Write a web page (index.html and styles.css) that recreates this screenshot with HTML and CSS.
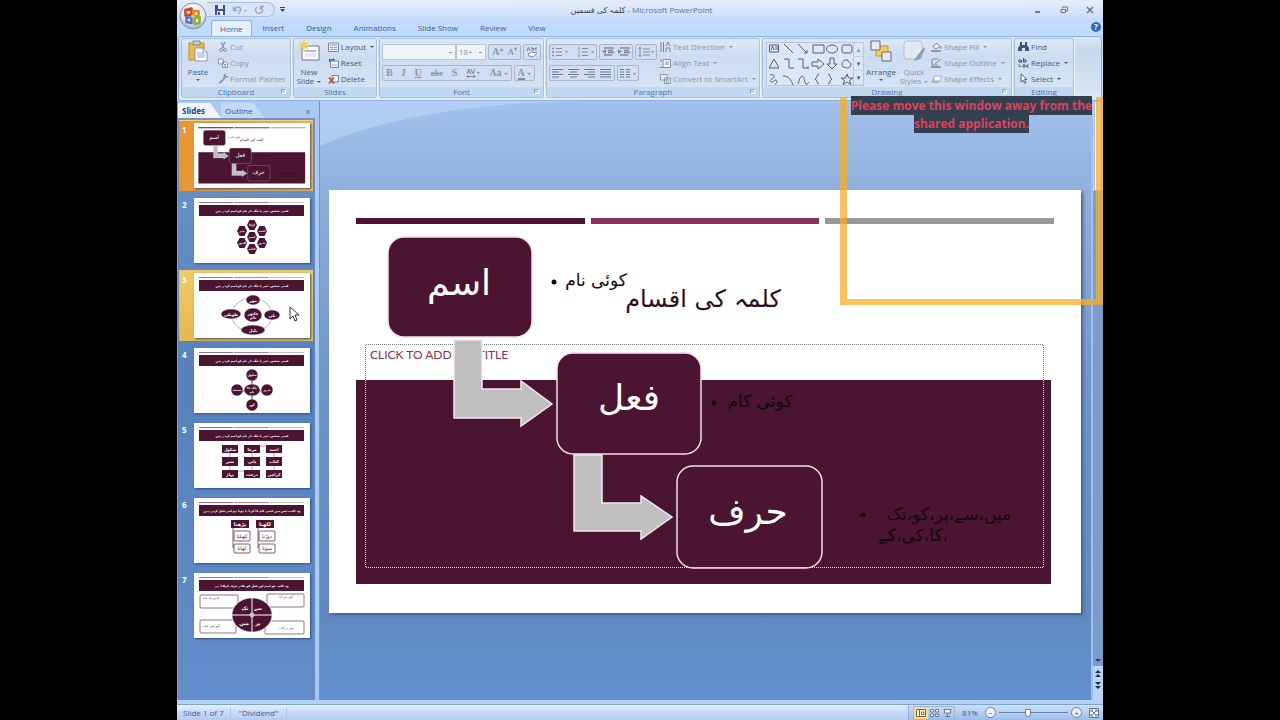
FILE: index.html
```
<!DOCTYPE html>
<html lang="en">
<head>
  <meta charset="UTF-8" />
  <title>کلمہ کی قسمیں - Microsoft PowerPoint</title>
  <link rel="stylesheet" href="styles.css">
</head>
<body>
  <div class="window">
    <header class="titlebar">
      <button class="office-btn" aria-label="Office Button">
        <svg viewBox="0 0 28 28" width="28" height="28">
          <defs>
            <radialGradient id="orb" cx="50%" cy="35%" r="65%">
              <stop offset="0" stop-color="#ffffff" />
              <stop offset="0.7" stop-color="#dfe4ee" />
              <stop offset="1" stop-color="#9aa6bd" />
            </radialGradient>
          </defs>
          <circle cx="14" cy="14" r="13" fill="url(#orb)" stroke="#8493b0" />
          <g fill="none" stroke-width="2.6" stroke-linejoin="round">
            <path d="M6.500 8l6-1.500v6l-6 1z" stroke="#d8451d" />
            <path d="M14.500 9h5v5h-5z" stroke="#e8862a" />
            <path d="M7.500 15.500h5v5.500l-5-1z" stroke="#4a78c4" />
            <path d="M15.500 16l5-1v6l-5 1z" stroke="#8db33a" />
          </g>
          <path d="M12.500 13h3v3h-3z" fill="#f4c63a" />
        </svg>
      </button>
      <div class="quick-access">
        <button aria-label="Save">
          <svg viewBox="0 0 10 10" width="10" height="10"><path d="M0 0h10v10H0z" fill="#3b4fa0" /><path d="M3 0h5v4H3z" fill="#dfe8fa" /><path d="M2 6h6v4H2z" fill="#eef3fc" /><path d="M3 7h2v3H3z" fill="#3b4fa0" /></svg>
        </button>
        <button aria-label="Undo">
          <svg viewBox="0 0 15 10" width="15" height="10" fill="none" stroke="#98a9c8"><path d="M1.500 1.500v4h4M2 5C4 1 9 1 8.500 4.500 8.500 7 7.500 8 6 9" stroke-width="1.500" /><path d="M12 5h3l-1.500 2z" fill="#98a9c8" stroke="none" /></svg>
        </button>
        <button aria-label="Repeat">
          <svg viewBox="0 0 10 10" width="10" height="10" fill="none" stroke="#98a9c8" stroke-width="1.500"><path d="M3 2a3.500 3.500 0 1 0 4 0M6.500 5V1.500H10" /></svg>
        </button>
      </div>
      <button class="qa-more" aria-label="Customize Quick Access Toolbar">
        <svg viewBox="0 0 5 5" width="5" height="5"><path d="M0 0h5v1H0zM0 2h5L2.500 5z" fill="#34496e" /></svg>
      </button>
      <h1 class="title"><span class="urdu" dir="rtl">کلمہ کی قسمیں</span> - Microsoft PowerPoint</h1>
      <div class="window-buttons">
        <button aria-label="Minimize"><svg viewBox="0 0 8 8" width="8" height="8"><path d="M1 5h5v2H1z" fill="#6b7686" /></svg></button>
        <button aria-label="Restore"><svg viewBox="0 0 8 8" width="8" height="8" fill="none" stroke="#6b7686"><path d="M2.500 2.500V1h5v4H6" /><path d="M1 3.500h4.500v3H1z" /></svg></button>
        <button aria-label="Close"><svg viewBox="0 0 8 8" width="8" height="8" stroke="#6b7686" stroke-width="1.500"><path d="M1 1l6 6M7 1L1 7" /></svg></button>
      </div>
    </header>

    <nav class="tabs">
      <button class="tab active">Home</button>
      <button class="tab">Insert</button>
      <button class="tab">Design</button>
      <button class="tab">Animations</button>
      <button class="tab">Slide Show</button>
      <button class="tab">Review</button>
      <button class="tab">View</button>
      <button class="help" aria-label="Help">?</button>
    </nav>

    <div class="ribbon">
      <section class="group clipboard">
        <div class="group-body">
          <button class="big">
            <svg viewBox="0 0 20 22" width="20" height="22"><path d="M1 3h15v17H1z" fill="#edb94c" stroke="#c48d28" /><path d="M5 1h7v4H5z" fill="#c3cad6" stroke="#7f8999" /><path d="M7 8h8l4 4v9H7z" fill="#fff" stroke="#8695b0" /><path d="M15 8v4h4M9 13h7M9 15h8M9 17h8" fill="none" stroke="#8fa9d6" /></svg>
            <span>Paste</span><i class="caret"></i>
          </button>
          <div class="stack">
            <button class="small" disabled><svg viewBox="0 0 10 10" width="10" height="10" fill="none" stroke="#8795ab"><path d="M3 0l3 6M7 0L4 6" stroke-width="1.300" /><circle cx="3" cy="8" r="1.500" /><circle cx="7" cy="8" r="1.500" /></svg>Cut</button>
            <button class="small" disabled><svg viewBox="0 0 10 10" width="10" height="10" fill="#edf2f9" stroke="#8795ab"><path d="M.5 1h4l1 1v4h-5zM4.500 4h4l1 1v4.500h-5z" /><path d="M6 6.500h2M6 8h2" /></svg>Copy</button>
            <button class="small" disabled><svg viewBox="0 0 10 10" width="10" height="10" fill="#8795ab"><path d="M6 0h2L7 5 3 9 0 10l2-3 3-2z" /><path d="M6 2h4v1.500H6z" /></svg>Format Painter</button>
          </div>
        </div>
        <div class="group-label">Clipboard<i class="launcher"></i></div>
      </section>

      <section class="group slides">
        <div class="group-body">
          <button class="big">
            <svg viewBox="0 0 22 22" width="22" height="22"><path d="M4 6h17v14H4z" fill="#fff" stroke="#66799c" /><path d="M7 10h11v2H7z" fill="#a5b9d9" /><path d="M7 14h11M7 16h11" stroke="#c6d0e0" /><path d="M6 0v11M1 5.500h10M2 2l8 7M10 2L2 9" stroke="#f0cf42" stroke-width="1.500" /></svg>
            <span>New<br />Slide<i class="caret"></i></span>
          </button>
          <div class="stack">
            <button class="small"><svg viewBox="0 0 11 10" width="11" height="10"><path d="M.5 1h10v8.500H.5z" fill="#f2f6fc" stroke="#7388ae" /><path d="M2 3h7M2 5.500h3M2 7.500h3M6 5.500h3M6 7.500h3" stroke="#8196bb" /></svg>Layout<i class="caret"></i></button>
            <button class="small"><svg viewBox="0 0 11 10" width="11" height="10"><path d="M2.500 3h8v6.500h-8z" fill="#f2f6fc" stroke="#7388ae" /><path d="M4 7h2M7 7h2" stroke="#8196bb" /><path d="M1 4V1h4V0l2 1.700L5 3.500V2.500H2V4z" fill="#3566b4" /></svg>Reset</button>
            <button class="small"><svg viewBox="0 0 11 10" width="11" height="10"><path d="M4 1.500h6.500V8H4z" fill="#f2f6fc" stroke="#7388ae" /><path d="M1 3.500l5 6M6 3.500l-5 6" stroke="#d6492e" stroke-width="1.700" /></svg>Delete</button>
          </div>
        </div>
        <div class="group-label">Slides</div>
      </section>

      <section class="group font">
        <div class="group-body rows">
          <div class="row">
            <select class="font-name" aria-label="Font" disabled><option></option></select>
            <select class="font-size" aria-label="Font Size" disabled><option>18+</option></select>
            <div class="btn-set serif"><button disabled>A<sup>▴</sup></button><button class="shrink" disabled>A<sup>▾</sup></button></div>
            <div class="btn-set"><button disabled aria-label="Clear Formatting"><svg viewBox="0 0 12 12" width="12" height="12" fill="none" stroke="#7e8ca4"><path d="M1 5l1.500-4L4 5M6 1v3h2V2.500H6M11 2H9.500v2H11" /><path d="M2 8l4-2 5 1-4 4-4-1z" fill="#fff" /></svg></button></div>
          </div>
          <div class="row">
            <div class="btn-set serif styles">
              <button disabled><b>B</b></button><button disabled><em>I</em></button><button disabled><u>U</u></button><button disabled><s>abe</s></button><button disabled><b>S</b></button><button disabled aria-label="Character Spacing"><svg viewBox="0 0 14 11" width="14" height="11" fill="none" stroke="#7e8ca4"><path d="M1 6l2-5 2 5M2 4h2M5 1l2 5 2-5M1 8.500h8M2.500 7L1 8.500 2.500 10M7.500 7L9 8.500 7.500 10" /><path d="M11 4h3l-1.500 2z" fill="#7e8ca4" stroke="none" /></svg></button><button disabled>Aa<i class="caret"></i></button>
            </div>
            <div class="btn-set serif"><button class="color" disabled><span>A</span><i class="caret"></i></button></div>
          </div>
        </div>
        <div class="group-label">Font<i class="launcher"></i></div>
      </section>

      <section class="group paragraph">
        <div class="group-body">
          <div class="rows">
            <div class="row">
              <div class="btn-set wide">
                <button disabled aria-label="Bullets"><svg viewBox="0 0 16 10" width="16" height="10" stroke="#7e8ca4"><path d="M4 1.500h6M4 5h6M4 8.500h6" /><path d="M0 1.500h2M0 5h2M0 8.500h2" stroke-width="1.500" /><path d="M13 4h3l-1.500 2z" fill="#7e8ca4" stroke="none" /></svg></button>
                <button disabled aria-label="Numbering"><svg viewBox="0 0 16 10" width="16" height="10" stroke="#7e8ca4"><path d="M4 1.500h6M4 5h6M4 8.500h6M1 0v3M1 4v2.500M1 7.500V10" /><path d="M13 4h3l-1.500 2z" fill="#7e8ca4" stroke="none" /></svg></button>
              </div>
              <div class="btn-set">
                <button disabled aria-label="Decrease Indent"><svg viewBox="0 0 12 10" width="12" height="10" stroke="#7e8ca4"><path d="M2 1h10M6 3.500h5M6 5.500h6M2 8h8" stroke-width="1.300" /><path d="M4 2v5L0 4.500z" fill="#7e8ca4" stroke="none" /></svg></button>
                <button disabled aria-label="Increase Indent"><svg viewBox="0 0 12 10" width="12" height="10" stroke="#7e8ca4"><path d="M2 1h10M6 3.500h5M6 5.500h6M2 8h8" stroke-width="1.300" /><path d="M0 2v5l4-2.500z" fill="#7e8ca4" stroke="none" /></svg></button>
              </div>
              <div class="btn-set"><button disabled aria-label="Line Spacing"><svg viewBox="0 0 16 10" width="16" height="10" fill="none" stroke="#7e8ca4"><path d="M2 0v10M.5 2L2 .5 3.500 2M.5 8L2 9.500 3.500 8M5 2h7M5 5h7M5 8h7" /><path d="M13 4h3l-1.500 2z" fill="#7e8ca4" stroke="none" /></svg></button></div>
            </div>
            <div class="row">
              <div class="btn-set">
                <button disabled aria-label="Align Left"><svg viewBox="0 0 12 9" width="12" height="9" stroke="#6e7d98"><path d="M0 .5h11M0 3h7M0 5.500h11M0 8h7" /></svg></button>
                <button disabled aria-label="Center"><svg viewBox="0 0 12 9" width="12" height="9" stroke="#6e7d98"><path d="M0 .5h11M2 3h7M0 5.500h11M2 8h7" /></svg></button>
                <button disabled aria-label="Align Right"><svg viewBox="0 0 12 9" width="12" height="9" stroke="#6e7d98"><path d="M0 .5h11M4 3h7M0 5.500h11M4 8h7" /></svg></button>
                <button disabled aria-label="Justify"><svg viewBox="0 0 12 9" width="12" height="9" stroke="#6e7d98"><path d="M0 .5h11M0 3h11M0 5.500h11M0 8h11" /></svg></button>
              </div>
              <div class="btn-set"><button disabled aria-label="Columns"><svg viewBox="0 0 16 9" width="16" height="9" stroke="#6e7d98"><path d="M0 .5h4M0 3h4M0 5.500h4M0 8h4M6 .5h4M6 3h4M6 5.500h4M6 8h4" /><path d="M13 4h3l-1.500 2z" fill="#7e8ca4" stroke="none" /></svg></button></div>
            </div>
          </div>
          <div class="stack">
            <button class="small" disabled><svg viewBox="0 0 11 10" width="11" height="10" fill="none" stroke="#7385a3"><path d="M1 0v10M3.500 0v10M6 10V6h4v4M6 4l2-4 2 4" /></svg>Text Direction<i class="caret"></i></button>
            <button class="small" disabled><svg viewBox="0 0 11 10" width="11" height="10" fill="#f4f7fc" stroke="#7e8ca4"><path d="M3 1.500h7.500v8H3z" /><path d="M1 1v3M5 4h4M5 6h4M0 9.500h3" /></svg>Align Text<i class="caret"></i></button>
            <button class="small" disabled><svg viewBox="0 0 11 10" width="11" height="10" fill="#e7edf6" stroke="#8b97ab"><path d="M.5.5H7V6H.5zM4.500 4h6v5.500h-6z" /><path d="M6 6h3M6 8h3" /></svg>Convert to SmartArt<i class="caret"></i></button>
          </div>
        </div>
        <div class="group-label">Paragraph<i class="launcher"></i></div>
      </section>

      <section class="group drawing">
        <div class="group-body">
          <div class="gallery">
            <svg viewBox="0 0 86 45" width="86" height="45" fill="none" stroke="#4f617f">
              <path d="M2.500 4h9v7h-9z" fill="#e3ebf7" /><path d="M4 9l1.500-4L7 9M8 6h3M8 8h3" />
              <path d="M17 3l9 9M31 3l9 9M40 9v3h-3" />
              <path d="M46 4h11v8H46z" /><ellipse cx="65" cy="8" rx="5.500" ry="4" /><rect x="75" y="4" width="10" height="8" rx="2" />
              <path d="M2 27l5-9 5 9zM17 18h5v9h5M31 18h5v9h5M41 25v3" />
              <path d="M45 21h6v-3l6 5-6 5v-3h-6zM63 17h4v6h3l-5 5-5-5h3z" /><path d="M76 26c-3-4 1-8 5-7-1 3 4 2 3 5-1 4-5 3-8 2z" />
              <path d="M3 34c4-2 6 2 2 4s0 5 3 1M8 39c3 0 2 4 0 4M16 35c6 0 8 4 10 9M31 43c4-14 6-6 7-2s3 2 4 0" />
              <path d="M52 33c-3 0-1 4-4 5 3 1 1 5 4 5M61 33c3 0 1 4 4 5-3 1-1 5-4 5" />
              <path d="M80 33l1.500 4H86l-3.500 2.500 1.500 4-4-2.500-4 2.500 1.500-4L74 37h4.500z" />
            </svg>
            <div class="gallery-nav"><button disabled>▴</button><button>▾</button><button>▾</button></div>
          </div>
          <button class="big">
            <svg viewBox="0 0 22 22" width="22" height="22" stroke-width="1"><path d="M6 6h12v10H6z" fill="#f6cf50" stroke="#b8942c" /><path d="M1 1h9v9H1z" fill="#e6eaf1" stroke="#5c6880" /><path d="M12 12h9v9h-9z" fill="#e6eaf1" stroke="#5c6880" /></svg>
            <span>Arrange</span><i class="caret"></i>
          </button>
          <button class="big" disabled>
            <svg viewBox="0 0 22 22" width="22" height="22"><rect x="1" y="1" width="18" height="18" rx="3" fill="#e2e9f3" stroke="#b2bdce" /><path d="M21 7l-7 9-3 5 6-2 5-10z" fill="#8f9db3" /></svg>
            <span>Quick<br />Styles<i class="caret"></i></span>
          </button>
          <div class="stack">
            <button class="small" disabled><svg viewBox="0 0 11 10" width="11" height="10" stroke="#7e8ca4" fill="#eef2f8"><path d="M2 4l4-3 3 4-5 2z" /><path d="M0 8h10v2H0z" fill="#8a97ac" stroke="none" /><path d="M10 4v3" /></svg>Shape Fill<i class="caret"></i></button>
            <button class="small" disabled><svg viewBox="0 0 11 10" width="11" height="10" stroke="#7e8ca4" fill="none"><path d="M7 1H1v6h6M10 1L4 6" /><path d="M0 8h10v2H0z" fill="#8a97ac" stroke="none" /></svg>Shape Outline<i class="caret"></i></button>
            <button class="small" disabled><svg viewBox="0 0 11 10" width="11" height="10"><path d="M1 5h7v4H1z" fill="#a7b3c6" /><path d="M3 2h7v5H3z" fill="#f6f9fd" stroke="#a7b3c6" /></svg>Shape Effects<i class="caret"></i></button>
          </div>
        </div>
        <div class="group-label">Drawing<i class="launcher"></i></div>
      </section>

      <section class="group editing">
        <div class="group-body">
          <div class="stack">
            <button class="small"><svg viewBox="0 0 11 10" width="11" height="10" fill="#3d5380"><path d="M2 0h2v3h3V0h2v3l2 3v3H7V6H4v3H0V6l2-3z" /></svg>Find</button>
            <button class="small"><svg viewBox="0 0 11 10" width="11" height="10" fill="none" stroke="#3d5380"><circle cx="2" cy="3" r="1.300" /><path d="M3.500 2v2.500M5.500 0v4.500" /><circle cx="7" cy="3" r="1.300" /><path d="M1 6v2.500h2" stroke="#3d9448" /><circle cx="6" cy="8" r="1.300" /><path d="M10.500 7H9v2h1.500" /></svg>Replace<i class="caret"></i></button>
            <button class="small"><svg viewBox="0 0 11 10" width="11" height="10"><path d="M3 0l6 5.500H6.500l1.500 3-1.300.8-1.400-3L3 8z" fill="#fff" stroke="#4a5f8c" /></svg>Select<i class="caret"></i></button>
          </div>
        </div>
        <div class="group-label">Editing</div>
      </section>
    </div>

    <main class="workspace">
      <aside class="pane">
        <div class="pane-tabs">
          <button class="pane-tab active">Slides</button>
          <button class="pane-tab">Outline</button>
          <button class="pane-close" aria-label="Close">x</button>
        </div>
        <ol class="thumbs">
          <li class="thumb selected"><span class="num">1</span>
            <svg class="page" viewBox="0 0 752 423"><use href="#slide-art" /><use href="#arrows" /></svg>
          </li>
          <li class="thumb"><span class="num">2</span>
            <svg class="page" viewBox="0 0 116 65">
              <g id="head">
                <path d="M5 4.500h34" stroke="#4b1431" stroke-width="0.600" /><path d="M40 4.500h35" stroke="#88305a" stroke-width="0.600" /><path d="M76 4.500h34" stroke="#999" stroke-width="0.600" />
                <path d="M5 7h105v11H5z" fill="#4b1431" />
              </g>
              <text id="noun" class="t" x="58" y="14">کسی شخص، چیز یا جگہ کے نام کو اسم کہتے ہیں</text>
              <g fill="#4b1431">
                <path id="hex" d="M53 27l2.500-5h5l2.500 5-2.500 5h-5z" />
                <use href="#hex" x="-10" y="6" /><use href="#hex" x="10" y="6" /><use href="#hex" y="12" /><use href="#hex" x="-10" y="18" /><use href="#hex" x="10" y="18" /><use href="#hex" y="24" />
              </g>
              <g class="t"><text x="58" y="28">لڑکا</text><text x="48" y="34">چیز</text><text x="68" y="34">احمد</text><text x="58" y="40">اسم</text><text x="48" y="46">لاہور</text><text x="68" y="46">شہر</text><text x="58" y="52">کتاب</text></g>
            </svg>
          </li>
          <li class="thumb hover"><span class="num">3</span>
            <svg class="page" viewBox="0 0 116 65">
              <use href="#head" /><use href="#noun" />
              <ellipse cx="58" cy="42" rx="20" ry="17" fill="none" stroke="#b5b2b5" />
              <g fill="#4b1431" stroke="#fff" stroke-width="0.500"><ellipse cx="59" cy="27" rx="7" ry="5" /><ellipse cx="37" cy="41" rx="10" ry="5" /><ellipse cx="78" cy="42" rx="8" ry="5" /><ellipse cx="59" cy="57" rx="12" ry="5" /><ellipse cx="59" cy="42" rx="9" ry="7" /></g>
              <g class="t big-t"><text x="59" y="29">مور</text><text x="37" y="43">طوطی</text><text x="78" y="44">بلی</text><text x="59" y="59">بلبل</text><text x="59" y="42">جانور</text><text x="59" y="46">نام</text></g>
            </svg>
          </li>
          <li class="thumb"><span class="num">4</span>
            <svg class="page" viewBox="0 0 116 65">
              <use href="#head" /><use href="#noun" />
              <path d="M58 28v30M43 43h30" stroke="#4b1431" />
              <g fill="#4b1431" stroke="#fff" stroke-width="0.500"><circle cx="58" cy="27" r="6" /><circle cx="43" cy="42" r="6" /><circle cx="73" cy="42" r="6" /><circle cx="58" cy="57" r="6" /><ellipse cx="58" cy="42" rx="8" ry="6" /></g>
              <g class="t"><text x="58" y="28">سکول</text><text x="43" y="43">مسجد</text><text x="73" y="43">شہر</text><text x="58" y="58">گھر</text><text x="58" y="41">جگہ کا</text><text x="58" y="45">نام</text></g>
            </svg>
          </li>
          <li class="thumb"><span class="num">5</span>
            <svg class="page" viewBox="0 0 116 65">
              <use href="#head" /><use href="#noun" />
              <path d="M28 22h16v8H28zM50 22h16v8H50zM72 22h16v8H72zM28 34h16v9H28zM50 34h16v9H50zM72 34h16v9H72zM28 47h16v8H28zM50 47h16v8H50zM72 47h16v8H72z" fill="#4b1431" />
              <path d="M36 30v4M58 30v4M80 30v4M36 43v4M58 43v4M80 43v4M44 48h6M66 23h6" stroke="#88305a" stroke-width="0.500" />
              <g class="t big-t"><text x="36" y="28">سکول</text><text x="58" y="28">مرغا</text><text x="80" y="28">احمد</text><text x="36" y="40">شیر</text><text x="58" y="40">پانی</text><text x="80" y="40">کتاب</text><text x="36" y="53">پہاڑ</text><text x="58" y="53">درخت</text><text x="80" y="53">کراچی</text></g>
            </svg>
          </li>
          <li class="thumb"><span class="num">6</span>
            <svg class="page" viewBox="0 0 116 65">
              <use href="#head" /><text class="t" x="58" y="14">وہ کلمہ جس میں کسی کام کا کرنا یا ہونا ہو اسے فعل کہتے ہیں</text>
              <path d="M37 22h18v8H37zM62 22h18v8H62z" fill="#4b1431" />
              <g fill="#fff" stroke="#4b1431" stroke-width="0.700"><path d="M39 30v20M64 30v20" /><rect x="40" y="33" width="16" height="10" rx="1" /><rect x="65" y="33" width="16" height="10" rx="1" /><rect x="40" y="46" width="16" height="9" rx="1" /><rect x="65" y="46" width="16" height="9" rx="1" /></g>
              <g class="t verb"><text x="46" y="28">پڑھنا</text><text x="71" y="28">لکھنا</text><text class="dark" x="48" y="40">کھیلنا</text><text class="dark" x="73" y="40">دوڑنا</text><text class="dark" x="48" y="52">کھانا</text><text class="dark" x="73" y="52">سونا</text></g>
            </svg>
          </li>
          <li class="thumb"><span class="num">7</span>
            <svg class="page" viewBox="0 0 116 65">
              <use href="#head" /><text class="t" x="58" y="14">وہ کلمہ جو اسم اور فعل کو ملائے حرف کہلاتا ہے</text>
              <g fill="#fff" stroke="#4b1431" stroke-width="0.600"><rect x="6" y="22" width="38" height="13" rx="1" /><rect x="73" y="21" width="37" height="13" rx="1" /><rect x="6" y="47" width="36" height="13" rx="1" /><rect x="71" y="48" width="39" height="13" rx="1" /></g>
              <ellipse cx="58" cy="42" rx="20" ry="17" fill="#4b1431" stroke="#fff" stroke-width="0.500" />
              <path d="M58 24v37M37 42h42" stroke="#fff" /><circle cx="58" cy="42" r="2" fill="none" stroke="#fff" stroke-width="0.800" />
              <g class="t verb"><text x="51" y="37">تک</text><text x="64" y="37">سے</text><text x="50" y="52">میں</text><text x="64" y="52">پر</text></g>
              <g class="t"><text class="dark" x="17" y="26">لاہور تک جانا</text><text class="dark" x="92" y="25">گھر سے آیا</text><text class="dark" x="17" y="54">گھر میں کتاب</text><text class="dark" x="92" y="56">میز پر کتاب</text></g>
            </svg>
          </li>
        </ol>
      </aside>

      <div class="canvas">
        <svg class="slide" viewBox="0 0 752 423">
          <g id="slide-art">
            <path d="M27 28h229v6H27z" fill="#4b1431" /><path d="M262 28h228v6H262z" fill="#88305a" /><path d="M496 28h229v6H496z" fill="#96989a" />
            <path d="M27 190h695v204H27z" fill="#4b1431" />
            <text class="heading" x="374" y="117">کلمہ کی اقسام</text>
            <g class="boxes"><rect x="59" y="47" width="144" height="100" rx="16" /><rect x="228" y="163" width="144" height="101" rx="16" /><rect x="348" y="276" width="145" height="102" rx="16" /></g>
            <g class="note"><circle cx="225" cy="92" r="2.500" /><text x="267" y="96">کوئی نام</text><circle cx="385" cy="213" r="2.500" /><text x="431" y="217">کوئی کام</text><circle cx="534" cy="325" r="2.500" /><text x="620" y="330">میں،سے،پر،کو،تک</text><text x="584" y="351">،کا،کی،کے</text></g>
            <g class="word"><text x="130" y="105">اسم</text><text x="300" y="220">فعل</text><text x="419" y="334">حرف</text></g>
          </g>
          <path d="M36.500 190V154.500h678V190" class="placeholder outside" />
          <path d="M36.500 190v187.500h678V190" class="placeholder" />
          <text class="subtitle" x="41" y="169">CLICK TO ADD SUBTITLE</text>
          <g id="arrows" fill="#c1bebf" stroke="#f3e9f1" stroke-width="1.500"><path d="M125 150h28v49h39v-8l31 23-31 22v-8h-67z" /><path d="M245 265h28v48h39v-7l31 21-31 22v-8h-67z" /></g>
        </svg>
      </div>

      <div class="scrollbar">
        <div class="scroll-thumb"></div>
        <div class="scroll-track"><i class="down"></i></div>
        <button aria-label="Previous Slide"><svg viewBox="0 0 6 8" width="6" height="8"><path d="M3 0l3 3H0zM3 4l3 3H0z" fill="#1d2d4c" /></svg></button>
        <button aria-label="Next Slide"><svg viewBox="0 0 6 8" width="6" height="8"><path d="M0 0h6L3 3zM0 4h6L3 7z" fill="#1d2d4c" /></svg></button>
      </div>
      <svg class="pointer" viewBox="0 0 10 16" width="10" height="16"><path d="M1 1v12l3-3 2 5 2-1-2-5h4z" fill="#fff" stroke="#333" /></svg>
    </main>

    <footer class="status">
      <span class="status-item">Slide 1 of 7</span>
      <span class="status-item">"Dividend"</span>
      <div class="status-right">
        <div class="views">
          <button class="on" aria-label="Normal"><svg viewBox="0 0 10 8" width="10" height="8" fill="#fff" stroke="#93602a"><path d="M.5.5h9v7h-9zM3.500.5v7M5.500 3h2.500v2.500H5.500z" /></svg></button>
          <button aria-label="Slide Sorter"><svg viewBox="0 0 9 8" width="9" height="8" fill="#fff" stroke="#6379a0"><path d="M.5.5h3v2.500h-3zM5.500.5h3v2.500h-3zM.5 5h3v2.500h-3zM5.500 5h3v2.500h-3z" /></svg></button>
          <button aria-label="Slide Show"><svg viewBox="0 0 9 8" width="9" height="8" fill="#fff" stroke="#6379a0"><path d="M.5.5h8M1.500.5v3.500h6V.5M4.500 4v3M2 7.500h5" /></svg></button>
        </div>
        <span class="zoom">81%</span>
        <button class="round" aria-label="Zoom Out">−</button>
        <input class="slider" type="range" aria-label="Zoom" min="0" max="100" value="41" />
        <button class="round" aria-label="Zoom In">+</button>
        <button class="fit" aria-label="Fit to Window"><svg viewBox="0 0 10 10" width="10" height="10" fill="none" stroke="#5d759f"><path d="M.5.5h9v9h-9z" fill="#fff" /><path d="M2 4V2h2M6 2h2v2M8 6v2H6M4 8H2V6M2 2l6 6M8 2L2 8" /></svg></button>
      </div>
    </footer>

    <div class="share-window"><span>Please move this window away from the shared application.</span></div>
  </div>
</body>
</html>
```
FILE: styles.css
```
* {
  box-sizing: border-box;
}

body {
  margin: 0;
  background: #000;
  font-family: "Open Sans", "Noto Sans", "DejaVu Sans", sans-serif;
  font-size: 8px;
  line-height: 10px;
  color: #3d5a8e;
}

button {
  margin: 0;
  padding: 0;
  border: 0;
  background: none;
  font: inherit;
  color: inherit;
}

svg {
  display: block;
  flex-shrink: 0;
}

.window {
  position: relative;
  display: flex;
  flex-direction: column;
  height: 100vh;
  margin: 0 177px;
  background: #bfdbff;
}

/* title bar */
.titlebar {
  display: flex;
  align-items: center;
  height: 19px;
  padding: 0 9px 0 2px;
  background: linear-gradient(#e6eefa, #d6e4f9 60%, #c8dcf8);
}

.office-btn {
  position: relative;
  z-index: 2;
  align-self: flex-start;
  margin-top: 2px;
}

.quick-access {
  display: flex;
  align-items: center;
  gap: 7px;
  height: 15px;
  padding: 0 10px 0 8px;
  border: 1px solid #a9bfdf;
  border-left: 0;
  border-radius: 0 8px 8px 0;
  background: #d7e4f7;
}

.qa-more {
  margin-left: 5px;
}

.title {
  flex: 1;
  margin: 0;
  padding-right: 36px;
  font-size: 8px;
  font-weight: 400;
  text-align: center;
  color: #5a6fae;
}

.title .urdu {
  color: #3c4350;
}

.window-buttons {
  display: flex;
  gap: 18px;
}

/* ribbon tabs */
.tabs {
  display: flex;
  align-items: flex-end;
  height: 17px;
  padding: 0 2px 0 34px;
  background: #bfdbff;
}

.tab {
  height: 16px;
  padding: 0 11px;
}

.tab.active {
  border: 1px solid #8db2e3;
  border-bottom: 0;
  border-radius: 3px 3px 0 0;
  padding: 0 8px;
  background: #e6effb;
}

.help {
  width: 10px;
  height: 10px;
  margin: 0 0 4px auto;
  border-radius: 50%;
  background: #3567b8;
  color: #fff;
  font-weight: 700;
  line-height: 10px;
}

/* ribbon */
.ribbon {
  display: flex;
  gap: 2px;
  height: 65px;
  margin: 0 1px;
  padding: 1px 2px 2px;
  border: 1px solid #8db2e3;
  border-radius: 3px;
  background: linear-gradient(#dbe6f4, #c8d8ec 20%, #d4e3f4 80%, #e0edfb);
}

.group {
  display: flex;
  flex-direction: column;
  flex-shrink: 0;
  border: 1px solid #a9c1dd;
  border-radius: 2px;
  box-shadow: 1px 0 0 #eef5fd;
  background: linear-gradient(#dde8f5, #cddcef 30%, #d6e4f5);
}

.clipboard { width: 110px; }
.slides { width: 84px; }
.font { width: 165px; }
.paragraph { width: 214px; }
.drawing { width: 250px; }
.editing { width: 60px; }

.group-body {
  display: flex;
  flex: 1;
  min-height: 0;
  padding: 0 2px;
}

.group-label {
  position: relative;
  height: 10px;
  background: #c1d8f1;
  text-align: center;
  line-height: 9px;
  color: #5674ad;
}

.launcher {
  position: absolute;
  right: 4px;
  top: 2px;
  width: 5px;
  height: 5px;
  border: 1px solid #8ba3c8;
  border-right-color: #fff;
  border-bottom-color: #fff;
}

.caret {
  display: inline-block;
  margin-left: 3px;
  border: 2px solid transparent;
  border-top-color: currentColor;
  border-bottom: 0;
  vertical-align: middle;
}

.big {
  display: flex;
  flex-direction: column;
  align-items: center;
  width: 28px;
  padding-top: 1px;
  line-height: 9px;
  white-space: nowrap;
}

.big svg {
  margin-bottom: 5px;
}

.big > .caret {
  margin: 3px 0 0;
}

.stack {
  display: flex;
  flex-direction: column;
  padding-left: 6px;
}

.small {
  display: flex;
  align-items: center;
  gap: 2px;
  height: 16px;
  white-space: nowrap;
}

.small .caret {
  margin-left: 2px;
}

button:disabled {
  color: #8995ab;
}

.rows {
  display: flex;
  flex-direction: column;
  gap: 5px;
  padding-top: 5px;
}

.row {
  display: flex;
  gap: 2px;
  height: 16px;
}

.font-name,
.font-size {
  appearance: none;
  height: 16px;
  margin: 0;
  padding: 0 2px;
  border: 1px solid #b4c4da;
  border-radius: 0;
  background: linear-gradient(#8995ab, #8995ab) right 3px center / 3px 1px no-repeat #f1f4f9;
  font: inherit;
  color: #8995ab;
  opacity: 1;
}

.font-name {
  width: 75px;
}

.font-size {
  width: 31px;
  margin-left: -2px;
}

.btn-set {
  display: flex;
  align-items: center;
  gap: 4px;
  padding: 0 2px;
  border: 1px solid #a6b7d0;
  border-radius: 2px;
  background: #d0deef;
  color: #7282a0;
}

.btn-set.serif {
  gap: 5px;
  padding: 0 3px;
  font: 700 10px/12px "Liberation Serif", serif;
}

.btn-set.styles {
  gap: 9px;
}

.btn-set b,
.btn-set u {
  font-size: 10px;
}

.btn-set s {
  font-size: 8px;
}

.btn-set sup {
  font-size: 6px;
  line-height: 6px;
}

.btn-set .shrink {
  font-size: 9px;
}

.btn-set .caret {
  margin-left: 2px;
}

.btn-set .color span {
  border-bottom: 2px solid #7c899f;
}

.btn-set.wide {
  gap: 10px;
}

.paragraph .stack {
  padding-left: 3px;
}

.gallery {
  display: flex;
  margin: 3px 0 0 1px;
  height: 44px;
  border: 1px solid #b4c7e0;
  background: #dce7f5;
}

.gallery > svg {
  margin-top: -2px;
}

.gallery-nav {
  display: flex;
  flex-direction: column;
  width: 10px;
  border-left: 1px solid #b4c7e0;
}

.gallery-nav button {
  flex: 1;
  border-bottom: 1px solid #c2d1e5;
  font-size: 7px;
}

.drawing .big {
  width: 32px;
  margin-left: 1px;
}

.drawing .stack,
.editing .stack {
  padding-left: 1px;
}

/* main area */
.workspace {
  position: relative;
  display: flex;
  flex: 1;
  min-height: 0;
  border-bottom: 4px solid #b4d2f7;
}

.pane {
  width: 142px;
  border-right: 4px solid #a9caf3;
  border-left: 1px solid #7a9dcd;
  background: linear-gradient(#6e95ca, #5681bb 45%, #628dc9);
}

.pane-tabs {
  display: flex;
  height: 17px;
  padding-top: 2px;
  background: #abc9f1;
}

.pane-tab {
  height: 15px;
  padding: 0 12px 0 4px;
  background: #c3d9f6;
  clip-path: polygon(0 0, 75% 0, 100% 100%, 0 100%);
  color: #34539a;
}

.pane-tab.active {
  padding-right: 16px;
  background: #eef5fe;
  font-weight: 700;
  color: #24407c;
}

.pane-close {
  margin: 0 5px 0 auto;
}

.thumbs {
  margin: 0;
  padding: 2px 2px 0 1px;
  list-style: none;
}

.thumb {
  display: flex;
  height: 75px;
  padding: 3px 3px 3px 3px;
  border-bottom: 4px solid transparent;
  background-clip: padding-box;
}

.thumb.selected {
  background-image: linear-gradient(90deg, #e8952f, #f3b25a);
  box-shadow: inset 0 1px #f7cd8e;
}

.thumb.hover {
  background-image: linear-gradient(#f0ca68, #e6b94e);
}

.num {
  width: 12px;
  padding-top: 2px;
  font-size: 8px;
  font-weight: 700;
  color: #fff;
}

.page {
  flex: 1;
  height: 65px;
  background: #fff;
  box-shadow: 1px 1px 2px #2f4f80;
}

.t {
  fill: #fff;
  font-family: "DejaVu Sans", sans-serif;
  font-size: 3px;
  font-weight: 700;
  text-anchor: middle;
}

.big-t {
  font-size: 4px;
}

.verb {
  font-size: 5px;
}

.dark {
  fill: #3a2a35;
  font-weight: 400;
}

.canvas {
  display: flex;
  flex: 1;
  align-items: center;
  padding: 2px 10px 0 9px;
  border-left: 1px solid #6f95c9;
  background:
    radial-gradient(336px 120px at 260px 120px, transparent 99%, rgba(196, 220, 250, 0.5) 100%) 0 0 / 260px 60px no-repeat,
    linear-gradient(#a2c1ec, #8fb0dc 90px, #7197cb 45%, #5f89bf 85%, #6391d0);
}

.slide {
  width: 100%;
  background: #fff;
  box-shadow: 2px 2px 3px #3e618f;
}

.boxes {
  fill: #4b1431;
  stroke: #f3dfec;
  stroke-width: 1.500px;
}

.heading,
.note,
.word {
  font-family: "DejaVu Sans", sans-serif;
  direction: rtl;
  text-anchor: middle;
}

.heading {
  fill: #2e0d20;
  font-size: 24px;
}

.note {
  fill: #140810;
  font-size: 17px;
}

.word {
  fill: #fff;
  font-size: 36px;
}

.placeholder {
  fill: none;
  stroke: #e9dbe4;
  stroke-dasharray: 1 1;
}

.placeholder.outside {
  stroke: #777;
}

.subtitle {
  fill: #88305a;
  font-family: Lato, sans-serif;
  font-size: 12px;
}

.scrollbar {
  display: flex;
  flex-direction: column;
  align-items: center;
  width: 12px;
  padding-bottom: 10px;
  border-left: 2px solid #9dc0ef;
  background: #b9d4f7;
}

.scroll-thumb {
  width: 8px;
  height: 90px;
  border: 1px solid #a5bfe2;
  background: #edf4fd;
}

.scroll-track {
  display: flex;
  flex: 1;
  align-items: flex-end;
  justify-content: center;
  width: 100%;
  padding-bottom: 4px;
  background: #7b9dcb;
}

.down {
  border: 3px solid transparent;
  border-top-color: #26416f;
  border-bottom: 0;
}

.scrollbar button {
  margin-top: 4px;
}

.pointer {
  position: absolute;
  left: 112px;
  top: 205px;
}

/* status bar */
.status {
  display: flex;
  align-items: center;
  height: 16px;
  border-top: 1px solid #7fa3d6;
  background: linear-gradient(#e6f0fd, #c5daf6 50%, #b3cdf0);
}

.status-item {
  padding: 0 6px;
  border-right: 1px solid #a9c2e4;
}

.status-item + .status-item {
  padding: 0 8px;
}

.status-right {
  display: flex;
  align-items: center;
  gap: 3px;
  height: 100%;
  margin-left: auto;
  padding: 0 4px;
  border-left: 1px solid #8facd8;
  background: linear-gradient(#cfe0f7, #9dbde8);
}

.views {
  display: flex;
  border: 1px solid #9db6d8;
}

.views button {
  padding: 2px;
}

.views .on {
  background: #f6dc9a;
}

.zoom {
  width: 24px;
  text-align: center;
}

.round {
  width: 11px;
  height: 11px;
  border: 1px solid #6483b5;
  border-radius: 50%;
  background: #eaf2fd;
  line-height: 8px;
}

.slider {
  appearance: none;
  width: 69px;
  height: 8px;
  margin: 0;
  background: linear-gradient(#6483b5, #6483b5) center / 100% 1px no-repeat;
}

.slider::-webkit-slider-thumb {
  appearance: none;
  width: 6px;
  height: 8px;
  border: 1px solid #6483b5;
  border-radius: 1px 1px 3px 3px;
  background: #fff;
}

.fit {
  margin-left: 4px;
}

/* frame left by the screen sharing tool */
.share-window {
  position: absolute;
  top: 97px;
  right: 0;
  width: 263px;
  height: 208px;
  border: solid rgba(250, 172, 38, 0.75);
  border-width: 0 7px 6px;
  font-size: 12px;
  font-weight: 700;
  line-height: 18px;
  text-align: center;
  color: #d9455c;
}

.share-window span {
  padding: 1px 0;
  background: #343f50;
}
```
